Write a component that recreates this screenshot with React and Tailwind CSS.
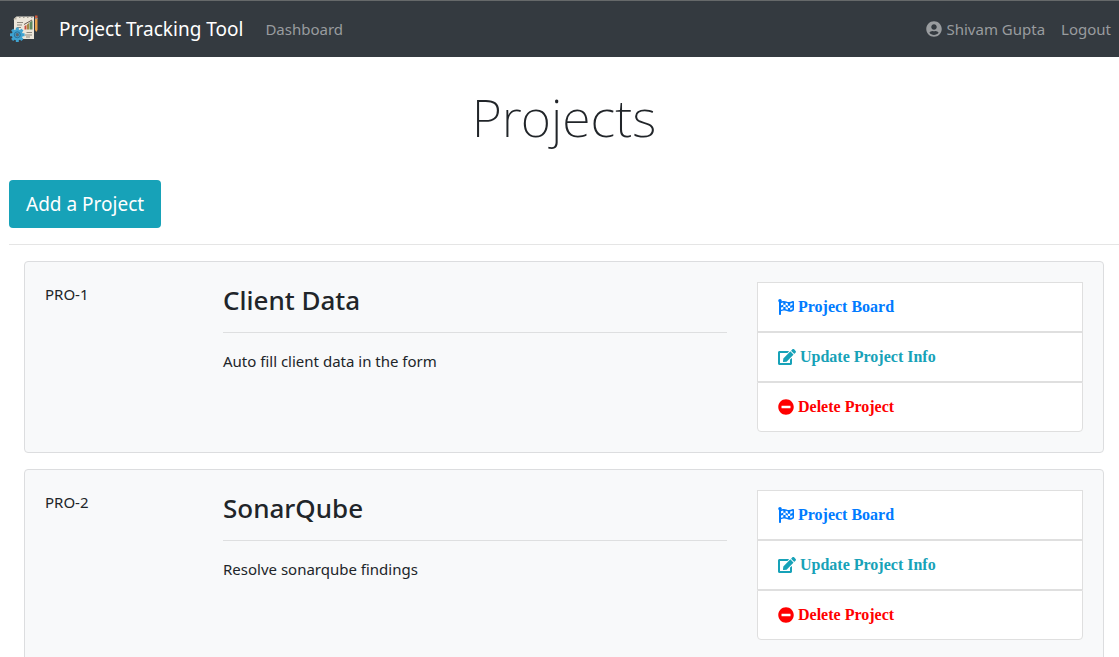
import React from "react";
import { FaEdit, FaFlagCheckered, FaMinusCircle, FaUserCircle } from "react-icons/fa";

const projects = [
  { id: "PRO-1", name: "Client Data", description: "Auto fill client data in the form" },
  { id: "PRO-2", name: "SonarQube", description: "Resolve sonarqube findings" },
];

const teeth = [0, 45, 90, 135, 180, 225, 270, 315];

function Logo() {
  return (
    <svg viewBox="0 0 30 30" className="size-[30px] shrink-0" aria-hidden="true">
      <path d="M7.5 2.5H25V25H5V5Z" fill="#ece6da" />
      <path d="M4.500 5 7.500 2.500V5.500H4.500Z" fill="#b9b3a6" />
      <path d="M10 3.500h1.500M14 3.500h1.500M18 3.500h1.500M22 3.500h1.500" stroke="#a39e94" strokeWidth="1" />
      <path d="M8 8.500h6M8 11h5M8 13.500h4M17.500 18.500h5.500M16 21h7M17 23h4" stroke="#8d887e" strokeWidth="1" />
      <path d="M15.500 12v3.500h2v-4.500z" fill="#c9503c" />
      <path d="M18 10.500v5h2V9z" fill="#a08a45" />
      <path d="M20.500 8.500v7H23.500V6.500z" fill="#5f8a62" />
      <path d="M15 10.500 23 6" stroke="#6b5b50" strokeWidth="1" />
      <path d="M26 4H28.500V16l-1.200 2-1.300-2z" fill="#e9a04a" />
      <path d="M26 1.500H28.500V4h-2.500z" fill="#cf5b3d" />
      <path d="M26 4H28.500V5h-2.500z" fill="#8b8d90" />
      <g fill="#3fa3d1">
        {teeth.map((angle) => (
          <rect key={angle} x="6.800" y="13.500" width="3" height="3" rx="0.500" transform={`rotate(${angle} 8.300 20.800)`} />
        ))}
        <circle cx="8.300" cy="20.800" r="5.500" />
      </g>
      <circle cx="8.300" cy="20.800" r="3" fill="none" stroke="#28719c" strokeWidth="1" />
      <circle cx="8.300" cy="20.800" r="1.700" fill="#5a6670" />
    </svg>
  );
}

function Navbar() {
  return (
    <nav className="flex min-h-[57px] items-center border-t border-[#66696a] bg-[#343a40] pr-2 pl-[9px] text-[15px] leading-6 text-[#999c9f]">
      <a href="#home" className="flex items-center text-[19px] leading-[30px] text-white">
        <Logo />
        <span className="ml-5">Project Tracking Tool</span>
      </a>
      <a href="#dashboard" className="ml-[22px]">Dashboard</a>
      <div className="ml-auto flex items-center gap-4">
        <a href="#profile" className="flex items-center gap-1">
          <FaUserCircle className="size-4" />
          Shivam Gupta
        </a>
        <a href="#logout">Logout</a>
      </div>
    </nav>
  );
}

function ProjectCard({ project }) {
  return (
    <article className="mb-4 rounded border border-[#dcdddf] bg-[#f8f9fa] p-5">
      <div className="-mx-[15px] grid grid-cols-12">
        <span className="col-span-2 px-[15px] text-[15px] leading-6">{project.id}</span>
        <div className="col-span-6 px-[15px]">
          <h3 className="mb-4 border-b border-[#dedfe0] pb-[14px] text-[26px] leading-9 font-medium">
            {project.name}
          </h3>
          <p className="text-[15px] leading-6">{project.description}</p>
        </div>
        <div className="col-span-4 px-[15px] font-['Liberation_Serif',serif] text-base leading-6 font-bold">
          <a href="#board" className="flex items-center gap-1 border border-[#dfdfdf] bg-white px-5 py-3 text-[#007bff]">
            <FaFlagCheckered className="size-4" />
            Project Board
          </a>
          <a href="#update" className="flex items-center gap-1 border border-[#dfdfdf] bg-white px-5 py-3 text-[#17a2b8]">
            <FaEdit className="h-4 w-[18px]" />
            Update Project Info
          </a>
          <button type="button" className="flex w-full items-center gap-1 rounded-b border border-[#dfdfdf] bg-white px-5 py-3 text-left text-[#ff0000]">
            <FaMinusCircle className="size-4" />
            Delete Project
          </button>
        </div>
      </div>
    </article>
  );
}

export default function App() {
  return (
    <div className="min-h-screen overflow-hidden bg-white font-['Noto_Sans','Open_Sans',sans-serif] text-[#212529]">
      <Navbar />
      <main className="pl-[9px]">
        <h1 className="pt-[26px] pb-[30px] text-center text-[52px] leading-[67px] font-extralight">Projects</h1>
        <button type="button" className="h-12 rounded bg-[#17a2b8] px-[17px] text-[19px] leading-[30px] text-white">
          Add a Project
        </button>
        <hr className="my-4 border-[#e5e5e5]" />
        <div className="px-[15px]">
          {projects.map((project) => (
            <ProjectCard key={project.id} project={project} />
          ))}
        </div>
      </main>
    </div>
  );
}
